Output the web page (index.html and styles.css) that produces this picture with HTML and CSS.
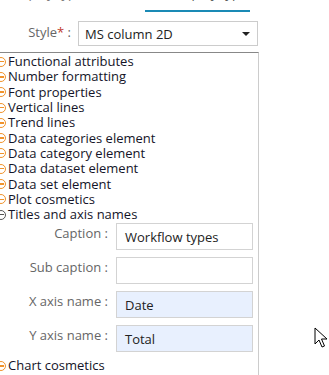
FILE: index.html
```html
<!DOCTYPE html>
<html lang="en">
<head>
    <meta charset="UTF-8">
    <title>Chart properties</title>
    <link rel="stylesheet" href="styles.css">
</head>
<body>
    <div class="top-row">
        <span class="top-label">Display type :</span>
        <div class="top-field"><span>Group by type</span></div>
    </div>

    <div class="style-row">
        <label class="style-label">Style<span class="req">*</span> :</label>
        <div class="select">
            <span>MS column 2D</span>
            <span class="caret"></span>
        </div>
    </div>

    <div class="panel">
        <div class="item"><span class="icon"></span>Functional attributes</div>
        <div class="item"><span class="icon"></span>Number formatting</div>
        <div class="item"><span class="icon"></span>Font properties</div>
        <div class="item"><span class="icon"></span>Vertical lines</div>
        <div class="item"><span class="icon"></span>Trend lines</div>
        <div class="item"><span class="icon"></span>Data categories element</div>
        <div class="item"><span class="icon"></span>Data category element</div>
        <div class="item"><span class="icon"></span>Data dataset element</div>
        <div class="item"><span class="icon"></span>Data set element</div>
        <div class="item"><span class="icon"></span>Plot cosmetics</div>
        <div class="item open"><span class="icon"></span>Titles and axis names</div>

        <div class="form">
            <div class="field-row">
                <label>Caption :</label>
                <div class="input">Workflow types</div>
            </div>
            <div class="field-row">
                <label>Sub caption :</label>
                <div class="input"></div>
            </div>
            <div class="field-row">
                <label>X axis name :</label>
                <div class="input filled">Date</div>
            </div>
            <div class="field-row">
                <label>Y axis name :</label>
                <div class="input filled">Total</div>
            </div>
        </div>

        <div class="item"><span class="icon"></span>Chart cosmetics</div>
    </div>

    <svg class="cursor" width="14" height="22" viewBox="0 0 14 22">
        <path d="M1 1 L1 17 L5 13 L8 20 L10.5 19 L7.5 12 L13 12 Z" fill="#fff" stroke="#000" stroke-width="1"/>
    </svg>
</body>
</html>
```

FILE: styles.css
```css
body {
    margin: 0;
    padding: 0;
    width: 329px;
    height: 375px;
    overflow: hidden;
    position: relative;
    background-color: #fff;
    font-family: "Open Sans", Arial, sans-serif;
    font-size: 13px;
    color: #222;
}
.top-row {
    display: flex;
    height: 12px;
    overflow: hidden;
    align-items: flex-start;
}
.top-label {
    width: 90px;
    text-align: right;
    color: #777;
    line-height: 16px;
    margin-top: -15px;
}
.top-field {
    margin-left: 55px;
    width: 105px;
    height: 10px;
    border-bottom: 2px solid #1a8ab5;
    overflow: hidden;
    color: #555;
    line-height: 16px;
}
.top-field span {
    display: block;
    margin-top: -15px;
    padding-left: 16px;
}
.style-row {
    display: flex;
    align-items: center;
    margin-top: 9px;
}
.style-label {
    width: 71px;
    text-align: right;
    color: #666;
    margin-top: -4px;
}
.req {
    color: #c0392b;
}
.select {
    margin-left: 7px;
    width: 165px;
    height: 23px;
    border: 1px solid #ccc;
    display: flex;
    align-items: center;
    justify-content: space-between;
    padding: 0 7px 0 6px;
    color: #222;
}
.caret {
    width: 0;
    height: 0;
    border-left: 4px solid transparent;
    border-right: 4px solid transparent;
    border-top: 4px solid #222;
}
.panel {
    margin-top: 6px;
    width: 258px;
    height: 330px;
    border-top: 1px solid #888;
    border-right: 1px solid #ccc;
    overflow: hidden;
}
.item {
    display: flex;
    align-items: center;
    height: 15.3px;
    line-height: 15px;
    white-space: nowrap;
    color: #141428;
}
.item:first-child {
    margin-top: 1px;
}
.icon {
    width: 8px;
    height: 8px;
    border: 1.5px solid #f0932b;
    border-radius: 50%;
    margin-left: -4px;
    margin-right: 2px;
    position: relative;
    flex-shrink: 0;
}
.icon::after {
    content: "";
    position: absolute;
    left: 1.5px;
    top: 3.2px;
    width: 5px;
    height: 1.5px;
    background-color: #f0932b;
}
.item.open .icon {
    border-color: #555;
}
.item.open .icon::after {
    background-color: #555;
}
.form {
    display: flex;
    flex-direction: column;
    gap: 7px;
    padding: 1px 0 6px;
}
.field-row {
    display: flex;
    align-items: center;
}
.field-row label {
    width: 108px;
    text-align: right;
    color: #666;
    margin-top: -8px;
}
.input {
    margin-left: 8px;
    width: 127px;
    height: 25px;
    border: 1px solid #d3d3d3;
    padding-left: 8px;
    display: flex;
    align-items: center;
    color: #222;
}
.input.filled {
    background-color: #e8f0fe;
}
.cursor {
    position: absolute;
    left: 314px;
    top: 327px;
}
```
